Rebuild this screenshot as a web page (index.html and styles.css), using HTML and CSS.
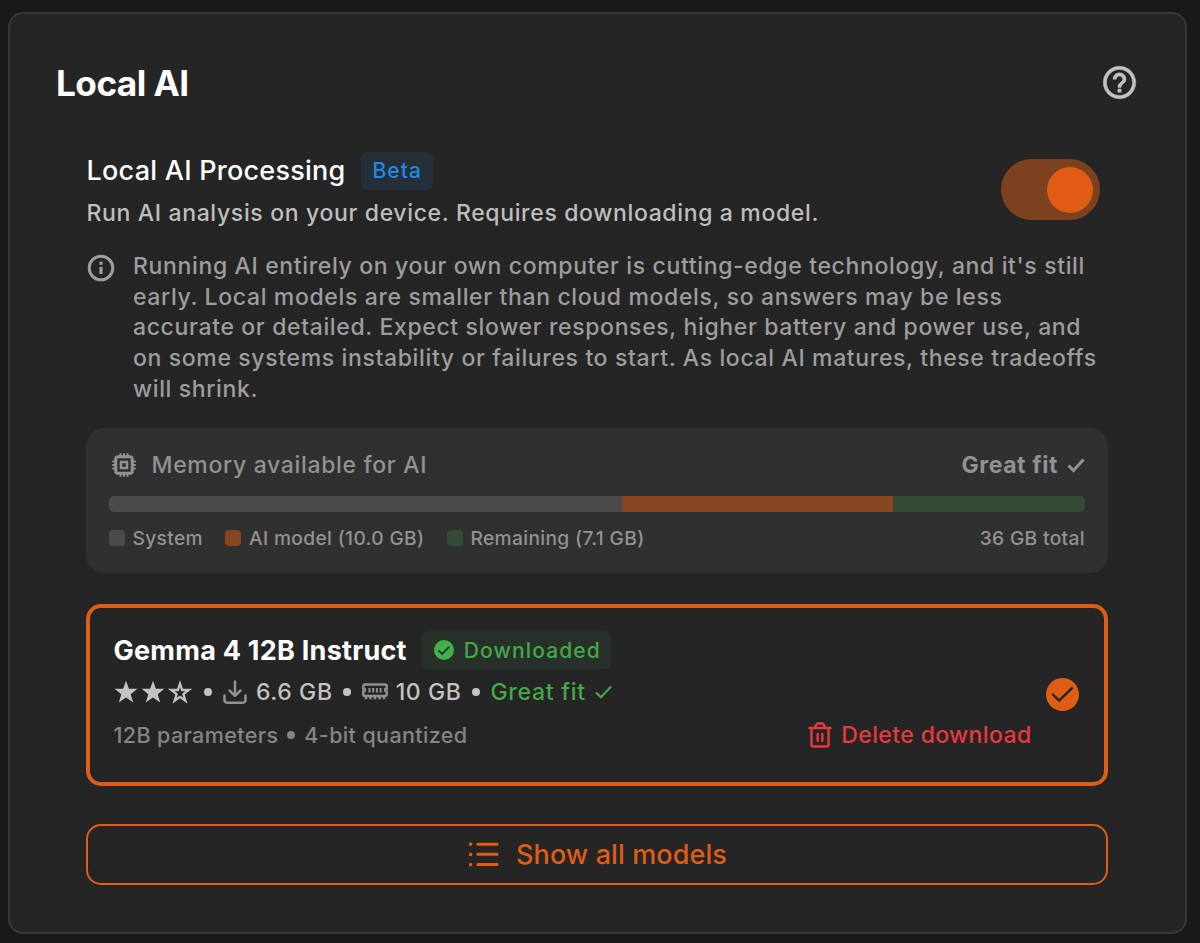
FILE: index.html
```
<!DOCTYPE html>
<html lang="en">
<head>
<meta charset="utf-8">
<title>Local AI</title>
<link rel="stylesheet" href="styles.css">
</head>
<body>
<main class="card">
  <header class="card-header">
    <h1 class="card-title">Local AI</h1>
    <svg class="help" viewBox="0 0 24 24" fill="currentColor" stroke="currentColor" stroke-width=".3"><path d="M11 18h2v-2h-2v2zm1-16C6.480 2 2 6.480 2 12s4.480 10 10 10 10-4.480 10-10S17.520 2 12 2zm0 18c-4.410 0-8-3.590-8-8s3.590-8 8-8 8 3.590 8 8-3.590 8-8 8zm0-14c-2.210 0-4 1.790-4 4h2c0-1.100.9-2 2-2s2 .9 2 2c0 2-3 1.750-3 5h2c0-2.250 3-2.500 3-5 0-2.210-1.790-4-4-4z"/></svg>
  </header>

  <section class="content">
    <div class="setting">
      <div class="setting-text">
        <div class="setting-heading"><h2 class="setting-title">Local AI Processing</h2><span class="beta">Beta</span></div>
        <p class="setting-desc">Run AI analysis on your device. Requires downloading a model.</p>
      </div>
      <div class="toggle" role="switch" aria-checked="true"><span class="knob"></span></div>
    </div>

    <div class="notice">
      <svg class="info" viewBox="0 0 28 28" fill="none" stroke="currentColor"><circle cx="14" cy="14" r="11.800" stroke-width="3"/><path d="M14 12.800v7.200" stroke-width="3.200"/><path d="M14 7.600v3.200" stroke-width="3.200"/></svg>
      <p class="notice-text">Running AI entirely on your own computer is cutting-edge technology, and it's still<br>early. Local models are smaller than cloud models, so answers may be less<br>accurate or detailed. Expect slower responses, higher battery and power use, and<br>on some systems instability or failures to start. As local AI matures, these tradeoffs<br>will shrink.</p>
    </div>

    <div class="memory">
      <div class="memory-head">
        <svg class="chip" viewBox="0 0 24 24" fill="none" stroke="currentColor"><rect x="3.800" y="3.800" width="16.400" height="16.400" rx="2" stroke-width="3"/><rect x="9" y="9" width="6" height="6" stroke-width="2.400"/><path d="M8.500 .3v3M12 .3v3M15.500 .3v3M8.500 20.700v3M12 20.700v3M15.500 20.700v3M.3 8.500h3M.3 12h3M.3 15.500h3M20.700 8.500h3M20.700 12h3M20.700 15.500h3" stroke-width="2"/></svg>
        <span class="memory-label">Memory available for AI</span>
        <span class="fit">Great fit</span>
        <svg class="fit-check" viewBox="0 0 18 14" fill="none" stroke="currentColor" stroke-width="3"><path d="M1.500 7.500l5 5L16.500 1.500"/></svg>
      </div>
      <div class="bar"><span class="seg system"></span><span class="seg model"></span><span class="seg free"></span></div>
      <div class="legend">
        <i class="dot system"></i><span class="legend-system">System</span>
        <i class="dot model"></i><span class="legend-model">AI model (10.0 GB)</span>
        <i class="dot free"></i><span>Remaining (7.1 GB)</span>
        <span class="total">36 GB total</span>
      </div>
    </div>

    <article class="model-card">
      <div class="model-main">
        <div class="name-row">
          <h3 class="model-name">Gemma 4 12B Instruct</h3>
          <span class="downloaded">
            <svg class="badge-check" viewBox="0 0 20 20"><circle cx="10" cy="10" r="10" fill="#43b04a"/><path d="M4.500 10.300l3.600 3.600 7.200-7.200" fill="none" stroke="#26332a" stroke-width="1.800"/></svg>
            <span class="downloaded-text">Downloaded</span>
          </span>
        </div>
        <div class="facts">
          <svg class="stars" viewBox="0 0 78 24" fill="#c3c3c3"><path id="star" d="M12 .8l2.900 8H23.400l-6.700 5.400 2.500 8.400-7.200-5-7.200 5 2.500-8.400L.6 8.800h8.500z"/><use href="#star" x="27"/><path d="M66 3.700l2.100 6.300h6.700l-5.400 4.100 2 6.700-5.400-3.900-5.400 3.900 2-6.700L57.200 10h6.700z" fill="none" stroke="#c3c3c3" stroke-width="2.300"/></svg>
          <span class="bullet"></span>
          <svg class="download" viewBox="0 0 24 24" fill="none" stroke="currentColor" stroke-width="2.500" stroke-linecap="round" stroke-linejoin="round"><path d="M12 1.500v14M6.500 10.500l5.500 5.300 5.500-5.300M1.500 15.500v4.700a2.500 2.500 0 0 0 2.500 2.500h16a2.500 2.500 0 0 0 2.500-2.500v-4.700"/></svg>
          <span class="disk">6.6 GB</span>
          <span class="bullet"></span>
          <svg class="ram" viewBox="0 0 26 18" fill="none" stroke="currentColor"><path d="M3 1.500h20a1.700 1.700 0 0 1 1.700 1.700v2.300a1.500 1.500 0 0 0 0 3v2.800a1.700 1.700 0 0 1-1.700 1.700H3a1.700 1.700 0 0 1-1.700-1.700V8.500a1.500 1.500 0 0 0 0-3V3.200A1.700 1.700 0 0 1 3 1.500z" stroke-width="2.500"/><path d="M7.500 5v4.500M11.200 5v4.500M14.900 5v4.500M18.600 5v4.500" stroke-width="2"/><path d="M4 13v3.300M8.500 13v3.300M13 13v3.300M17.500 13v3.300M22 13v3.300" stroke-width="2.400"/></svg>
          <span class="ram-size">10 GB</span>
          <span class="bullet"></span>
          <span class="great">Great fit</span>
          <svg class="great-check" viewBox="0 0 17 14" fill="none" stroke="currentColor" stroke-width="2.200"><path d="M1 7.500l5 4.700L16 1.500"/></svg>
        </div>
        <div class="details">
          <span class="params">12B parameters</span><span class="bullet small"></span><span class="params">4-bit quantized</span>
          <span class="delete">
            <svg class="trash" viewBox="0 0 24 26" fill="none" stroke="currentColor" stroke-width="2.400" stroke-linecap="round" stroke-linejoin="round"><path d="M1.500 6h21M3.500 6v16.500a2 2 0 0 0 2 2h13a2 2 0 0 0 2-2V6M7 5.600l1.300-3.200a1.500 1.500 0 0 1 1.300-.9h4.800a1.500 1.500 0 0 1 1.300.9L17 5.600M9.700 12v6.800M14.300 12v6.800"/></svg>
            <span class="delete-text">Delete download</span>
          </span>
        </div>
      </div>
      <svg class="selected" viewBox="0 0 32 32"><circle cx="16" cy="16" r="16" fill="#e05d16"/><path d="M6 15.300l6.700 6.700L26 9" fill="none" stroke="#252525" stroke-width="2.300"/></svg>
    </article>

    <button class="show-all" type="button">
      <svg class="list" viewBox="0 0 30 26" fill="currentColor"><rect x="0" y="0.500" width="3.200" height="3.200" rx="1"/><rect x="0" y="10.700" width="3.200" height="3.200" rx="1"/><rect x="0" y="21" width="3.200" height="3.200" rx="1"/><rect x="7.500" y="0.700" width="22" height="3" rx="1.200"/><rect x="7.500" y="10.800" width="22" height="3" rx="1.200"/><rect x="7.500" y="21.100" width="22" height="3" rx="1.200"/></svg>
      <span class="show-all-text">Show all models</span>
    </button>
  </section>
</main>
</body>
</html>
```
FILE: styles.css
```
* { box-sizing: border-box; }
body { margin: 0; padding: 12px 13.500px 0 8px; height: 943px; overflow: hidden; background: #191919; font-family: Inter, "Liberation Sans", sans-serif; font-weight: 450; white-space: nowrap; }
h1, h2, h3, p { margin: 0; }
svg { display: block; flex: none; overflow: visible; }
.card { height: 921.500px; border: 2px solid #383838; border-radius: 15px; background: #252525; }
.card-header { display: flex; align-items: center; justify-content: space-between; height: 137px; padding: 1px 47.500px 0 46px; }
.card-title { color: #fff; font-size: 35.200px; font-weight: 700; line-height: 40px; letter-spacing: -0.550px; }
.help { width: 39px; height: 39px; margin: -2px -2px 0 0; color: #c3c3c3; }
.content { padding: 0 76.500px 0 76px; }

.setting { display: flex; align-items: center; justify-content: space-between; height: 77px; padding: 0 8px 0 0.500px; }
.setting-heading { display: flex; align-items: center; height: 38px; }
.setting-title { color: #fff; font-size: 27px; font-weight: 450; letter-spacing: 0.250px; }
.beta { height: 38px; margin-left: 15.500px; padding: 0 11px 0 11.500px; border-radius: 6px; background: #242f39; color: #2589e6; font-size: 21px; font-weight: 500; line-height: 38px; letter-spacing: 1px; }
.setting-desc { margin-top: 8px; color: #bebebe; font-size: 23px; line-height: 30px; letter-spacing: 0.650px; }
.toggle { display: flex; justify-content: flex-end; width: 99px; height: 61px; padding: 7.500px; border-radius: 31px; background: #7c411e; }
.knob { width: 46px; height: 46px; border-radius: 50%; background: #e05c15; }

.notice { display: flex; gap: 18px; margin-top: 23px; }
.info { width: 28px; height: 28px; margin: 3px 0 0 1px; color: #9d9d9d; }
.notice-text { color: #9d9d9d; font-size: 23px; line-height: 30.700px; letter-spacing: 0.640px; }

.memory { height: 145px; margin-top: 23.500px; padding: 22px 23px 0; border-radius: 18px; background: #303030; color: #929292; }
.memory-head { display: flex; align-items: center; height: 30px; padding-left: 3px; }
.chip { width: 24px; height: 24px; }
.memory-label { margin-left: 15.500px; font-size: 23px; letter-spacing: 0.670px; }
.fit { margin-left: auto; font-size: 23px; font-weight: 700; letter-spacing: 0.600px; }
.fit-check { width: 18px; height: 14px; margin-left: 9px; }
.bar { display: flex; height: 16px; margin-top: 16px; overflow: hidden; border-radius: 5px; }
.seg.system { width: 513px; }
.seg.model { width: 271px; }
.seg.free { flex: 1; }
.system { background: #4b4b4b; }
.model { background: #874620; }
.free { background: #354b36; }
.legend { display: flex; align-items: center; height: 28px; margin-top: 11.500px; font-size: 19.200px; letter-spacing: 0.340px; }
.dot { width: 16px; height: 16px; margin-right: 7.500px; border-radius: 4px; }
.legend-system, .legend-model { margin-right: 22.500px; }
.total { margin-left: auto; }

.model-card { display: flex; align-items: center; justify-content: space-between; height: 182px; margin-top: 31px; padding: 0 25.500px 0 23.500px; border: 4px solid #df5d16; border-radius: 15px; }
.model-main { width: 918px; height: 128px; }
.name-row { display: flex; align-items: center; height: 38px; }
.model-name { color: #fff; font-size: 27px; font-weight: 700; letter-spacing: 0.250px; }
.downloaded { display: flex; align-items: center; height: 38px; margin-left: 15px; padding: 0 10.500px 0 12.500px; border-radius: 6px; background: #283129; }
.badge-check { width: 20px; height: 20px; }
.downloaded-text { margin-left: 9.500px; color: #43a949; font-size: 21px; font-weight: 500; letter-spacing: 1.120px; }
.facts { display: flex; align-items: center; height: 46px; color: #c3c3c3; font-size: 23px; letter-spacing: 0.600px; }
.stars { width: 78px; height: 24px; margin-left: 0.500px; }
.bullet { flex: none; width: 8px; height: 8px; border-radius: 50%; background: #c3c3c3; }
.stars + .bullet { margin: 0 0 0 11.500px; }
.download { width: 24px; height: 24px; margin-left: 11.500px; color: #929292; }
.disk { margin: 0 10px 0 9px; }
.ram { width: 26px; height: 18px; margin-left: 11px; color: #929292; }
.ram-size { margin: 0 10.500px 0 8px; }
.great { margin-left: 10.500px; color: #43a949; letter-spacing: 0.720px; }
.great-check { width: 17px; height: 14px; margin-left: 9px; color: #43a949; }
.details { display: flex; align-items: center; height: 40px; color: #858585; }
.params { font-size: 21.500px; letter-spacing: 0.380px; }
.bullet.small { margin: 0 9px; background: #858585; }
.delete { display: flex; align-items: center; margin-left: auto; color: #e7393f; }
.trash { width: 24px; height: 26px; }
.delete-text { margin-left: 9px; font-size: 23px; letter-spacing: 0.380px; }
.selected { width: 33px; height: 33px; margin-top: -1px; }

.show-all { display: flex; align-items: center; justify-content: center; width: 100%; height: 61px; margin-top: 38px; padding: 0; border: 2px solid #df5d16; border-radius: 15px; background: transparent; color: #df5d16; font: 500 27px Inter, sans-serif; }
.show-all-text { letter-spacing: 0.100px; }
.list { width: 30px; height: 26px; margin: 0 17px 0 2px; }
```
